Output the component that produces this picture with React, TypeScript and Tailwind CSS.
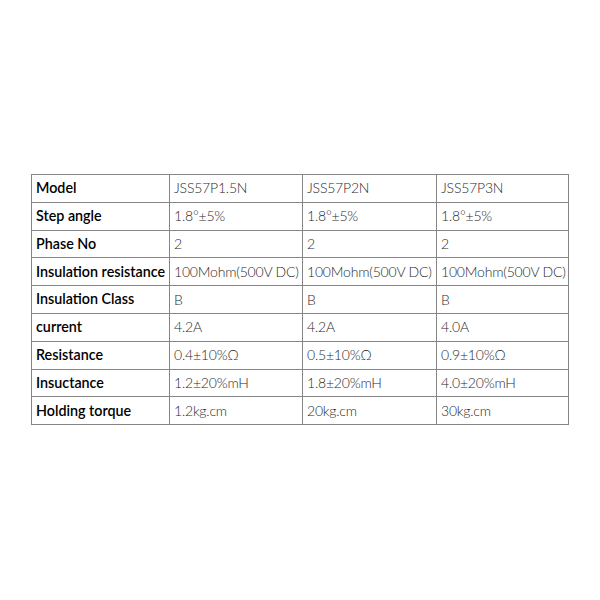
import React from "react";

const rows: [string, string, string, string][] = [
  ["Model", "JSS57P1.5N", "JSS57P2N", "JSS57P3N"],
  ["Step angle", "1.8°±5%", "1.8°±5%", "1.8°±5%"],
  ["Phase No", "2", "2", "2"],
  ["Insulation resistance", "100Mohm(500V DC)", "100Mohm(500V DC)", "100Mohm(500V DC)"],
  ["Insulation Class", "B", "B", "B"],
  ["current", "4.2A", "4.2A", "4.0A"],
  ["Resistance", "0.4±10%Ω", "0.5±10%Ω", "0.9±10%Ω"],
  ["Insuctance", "1.2±20%mH", "1.8±20%mH", "4.0±20%mH"],
  ["Holding torque", "1.2kg.cm", "20kg.cm", "30kg.cm"],
];

export default function App() {
  return (
    <div className="w-[600px] h-[600px] bg-white flex items-start justify-start" style={{ fontFamily: "Lato, 'Noto Sans', sans-serif" }}>
      <div className="pt-[174px] pl-[31px]">
        <table className="border-collapse table-fixed w-[537px]">
          <colgroup>
            <col className="w-[138px]" />
            <col className="w-[133px]" />
            <col className="w-[134px]" />
            <col className="w-[132px]" />
          </colgroup>
          <tbody>
            {rows.map((r, i) => (
              <tr key={i} className="h-[27.8px]">
                <td className="border border-[#858585] pl-[4px] pr-0 py-0 text-[14.3px] font-semibold text-black whitespace-nowrap leading-none">
                  {r[0]}
                </td>
                {r.slice(1).map((c, j) => (
                  <td
                    key={j}
                    className="border border-[#858585] pl-[4px] pr-0 py-0 text-[14px] font-light text-[#2a2a2a] whitespace-nowrap leading-none tracking-[-0.2px]"
                  >
                    {c}
                  </td>
                ))}
              </tr>
            ))}
          </tbody>
        </table>
      </div>
    </div>
  );
}
